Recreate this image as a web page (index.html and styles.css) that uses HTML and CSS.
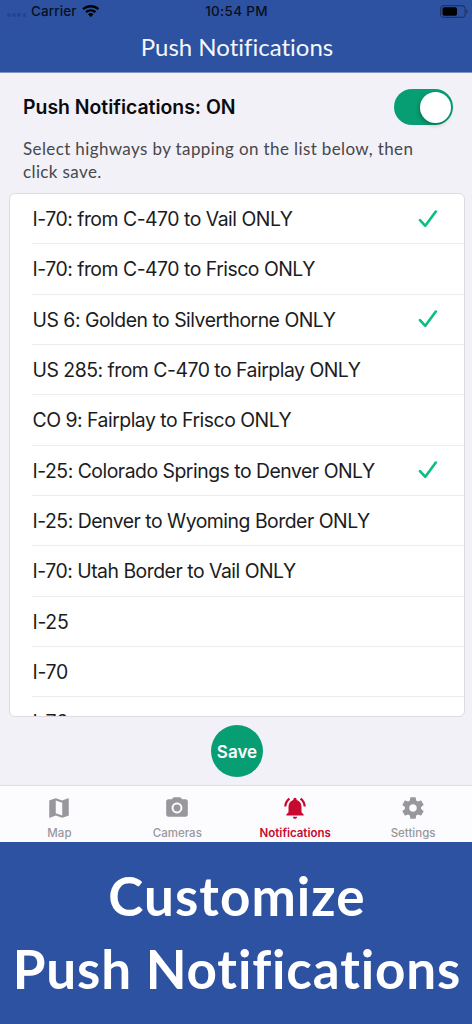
FILE: index.html
```html
<!DOCTYPE html>
<html lang="en">
<head>
<meta charset="utf-8">
<title>Push Notifications</title>
<link rel="stylesheet" href="styles.css">
</head>
<body>
<div class="screen">
  <header class="header">
    <div class="status">
      <div class="carrier">
        <span class="dots"><i></i><i></i><i></i><i></i></span>
        <span class="carrier-name">Carrier</span>
        <svg class="wifi" viewBox="0 0 18 13"><path d="M9 0C5.600 0 2.500 1.300.2 3.500l1.700 1.800C3.800 3.500 6.300 2.500 9 2.500s5.200 1 7.100 2.800l1.700-1.800C15.500 1.300 12.400 0 9 0zM9 4.300c-2.200 0-4.200.8-5.700 2.300l1.700 1.700C6.100 7.300 7.500 6.700 9 6.700s2.900.6 4 1.600l1.700-1.700C13.200 5.100 11.200 4.300 9 4.300zM9 8.400c-1.100 0-2.100.4-2.800 1.100L9 12.600l2.800-3.100C11.100 8.800 10.100 8.400 9 8.400z"/></svg>
      </div>
      <span class="time">10:54 PM</span>
      <svg class="battery" viewBox="0 0 28 13"><rect x=".6" y=".6" width="24.500" height="11.800" rx="3.500" fill="none" stroke="#1d3464" stroke-width="1.100"/><rect x="2.500" y="2.200" width="14.500" height="8.600" rx="1.800"/><path d="M26.200 4.500c2 .7 2 3.300 0 4z" fill="#1d3464"/></svg>
    </div>
    <h1 class="title">Push Notifications</h1>
  </header>
  <main class="main">
    <div class="toggle-row">
      <strong class="toggle-label">Push Notifications: ON</strong>
      <span class="switch"><span class="knob"></span></span>
    </div>
    <p class="hint">Select highways by tapping on the list below, then<br>click save.</p>
    <ul class="list">
      <li class="row"><span>I-70: from C-470 to Vail ONLY</span><svg class="check" viewBox="0 0 20 18"><path d="M2 10.200l5.300 5.600L17.800 1.600"/></svg></li>
      <li class="row"><span>I-70: from C-470 to Frisco ONLY</span></li>
      <li class="row"><span>US 6: Golden to Silverthorne ONLY</span><svg class="check" viewBox="0 0 20 18"><path d="M2 10.200l5.300 5.600L17.800 1.600"/></svg></li>
      <li class="row"><span>US 285: from C-470 to Fairplay ONLY</span></li>
      <li class="row"><span>CO 9: Fairplay to Frisco ONLY</span></li>
      <li class="row"><span>I-25: Colorado Springs to Denver ONLY</span><svg class="check" viewBox="0 0 20 18"><path d="M2 10.200l5.300 5.600L17.800 1.600"/></svg></li>
      <li class="row"><span>I-25: Denver to Wyoming Border ONLY</span></li>
      <li class="row"><span>I-70: Utah Border to Vail ONLY</span></li>
      <li class="row short"><span>I-25</span></li>
      <li class="row short"><span>I-70</span></li>
      <li class="row short"><span>I-76</span></li>
    </ul>
    <div class="save-wrap"><button class="save">Save</button></div>
  </main>
  <nav class="tabs">
    <div class="tab"><svg class="icon" viewBox="0 0 24 24"><path d="M20.500 3l-.16.03L15 5.100 9 3 3.360 4.900c-.21.070-.36.250-.36.480V20.500c0 .28.220.5.500.5l.16-.03L9 18.900l6 2.100 5.640-1.900c.21-.07.36-.25.36-.48V3.500c0-.28-.22-.5-.5-.5zM15 19l-6-2.110V5l6 2.110V19z"/></svg><span>Map</span></div>
    <div class="tab"><svg class="icon" viewBox="0 0 24 24"><circle cx="12" cy="12" r="3.200"/><path d="M9 2L7.170 4H4c-1.100 0-2 .9-2 2v12c0 1.100.9 2 2 2h16c1.100 0 2-.9 2-2V6c0-1.100-.9-2-2-2h-3.170L15 2H9zm3 15c-2.760 0-5-2.240-5-5s2.240-5 5-5 5 2.240 5 5-2.240 5-5 5z"/></svg><span>Cameras</span></div>
    <div class="tab active"><svg class="icon" viewBox="0 0 24 24"><path d="M7.580 4.080L6.150 2.650C3.750 4.480 2.170 7.300 2.030 10.500h2c.15-2.650 1.510-4.970 3.550-6.420zM19.970 10.500h2c-.15-3.200-1.730-6.020-4.120-7.850l-1.420 1.430c2.020 1.450 3.390 3.770 3.540 6.420zM18 11c0-3.070-1.640-5.640-4.500-6.320V4c0-.83-.67-1.500-1.500-1.500s-1.500.67-1.500 1.500v.68C7.630 5.360 6 7.920 6 11v5l-2 2v1h16v-1l-2-2v-5zM12 22c.14 0 .27-.01.4-.04.65-.14 1.180-.58 1.440-1.180.1-.24.150-.5.150-.78h-4c.01 1.100.9 2 2.010 2z"/></svg><span>Notifications</span></div>
    <div class="tab"><svg class="icon" viewBox="0 0 24 24"><path d="M19.430 12.980c.04-.32.070-.64.070-.98s-.03-.66-.07-.98l2.110-1.650c.19-.15.240-.42.120-.64l-2-3.460c-.12-.22-.39-.3-.61-.22l-2.490 1c-.52-.4-1.080-.73-1.690-.98l-.38-2.650C14.460 2.180 14.250 2 14 2h-4c-.25 0-.46.180-.49.420l-.38 2.650c-.61.250-1.170.59-1.690.98l-2.490-1c-.23-.09-.49 0-.61.220l-2 3.460c-.13.220-.07.490.12.640l2.110 1.650c-.04.320-.07.650-.07.980s.03.660.07.980l-2.110 1.650c-.19.150-.24.420-.12.640l2 3.460c.12.220.39.300.61.220l2.490-1c.52.400 1.080.730 1.690.980l.38 2.650c.03.240.24.420.49.420h4c.25 0 .46-.18.490-.42l.38-2.650c.61-.25 1.170-.59 1.690-.98l2.490 1c.23.090.49 0 .61-.22l2-3.460c.12-.22.070-.49-.12-.64l-2.110-1.650zM12 15.500c-1.930 0-3.500-1.570-3.500-3.500s1.570-3.500 3.500-3.500 3.500 1.570 3.500 3.500-1.570 3.500-3.500 3.500z"/></svg><span>Settings</span></div>
  </nav>
  <section class="banner">
    <div>Customize</div>
    <div class="wide">Push Notifications</div>
  </section>
</div>
</body>
</html>
```
FILE: styles.css
```css
* { box-sizing: border-box; }
body { margin: 0; font-family: Inter, "Liberation Sans", sans-serif; }
.screen { width: 472px; height: 1024px; overflow: hidden; display: flex; flex-direction: column; background: #f2f1f8; color: #1c1c1e; }
.header { height: 73px; background: #2d52a2; border-bottom: 1px solid #8094c3; flex: none; }
.status { height: 22px; display: grid; grid-template-columns: 1fr auto 1fr; align-items: center; padding: 0 4px 0 7px; color: #0a0f1c; font-size: 13.5px; font-weight: 500; }
.carrier { display: flex; align-items: center; }
.dots { display: flex; gap: 1.700px; padding-top: 8px; margin-right: 5px; }
.dots i { width: 3.500px; height: 3.500px; border-radius: 50%; background: #26468c; }
.carrier-name { letter-spacing: .1px; }
.wifi { width: 17.500px; height: 12.500px; margin-left: 5px; }
.time { letter-spacing: .3px; margin-right: 2px; }
.battery { width: 28px; height: 13px; justify-self: end; }
.title { margin: 0; text-align: center; font: 400 24px/49px Lato, sans-serif; letter-spacing: 0; color: #f4f6fb; font-variant-ligatures: none; padding-left: 2px; }
.main { flex: 1; display: flex; flex-direction: column; padding: 0 7px 0 9px; }
.toggle-row { display: flex; justify-content: space-between; align-items: center; height: 36px; margin-top: 16px; padding: 0 12px 0 14px; }
.toggle-label { font-size: 19.400px; font-weight: 600; color: #0b0b0d; }
.switch { width: 59px; height: 36px; border-radius: 18px; background: #089e73; padding: 2.500px; display: flex; justify-content: flex-end; }
.knob { width: 31px; height: 31px; border-radius: 50%; background: #fff; box-shadow: -1px 2px 4px #0004; }
.hint { margin: 12px 0 0 14px; font: 400 17px/23px Lato, sans-serif; letter-spacing: .38px; color: #47474c; height: 56px; }
.list { list-style: none; margin: 0; padding: 0; height: 524px; border: 1.500px solid #dcdce1; border-radius: 6px; background: #fff; overflow: hidden; }
.row { height: 50.350px; margin-left: 22px; padding: 0 26px 0 0; border-bottom: 1px solid #ececef; display: flex; align-items: center; justify-content: space-between; font-size: 19.400px; white-space: nowrap; letter-spacing: -.49px; }
.row span { padding: .6px 0 0 .5px; }
.short { letter-spacing: -.3px; }
.check { width: 20px; height: 18px; fill: none; stroke: #08be85; stroke-width: 2.600; stroke-linecap: round; stroke-linejoin: round; }
.save-wrap { display: flex; justify-content: center; padding-top: 8px; }
.save { width: 52px; height: 52px; border: 0; padding: 2px 0 0; border-radius: 50%; background: #089e73; color: #fff; font: 600 17px Inter, sans-serif; }
.tabs { height: 57px; flex: none; display: grid; grid-template-columns: repeat(4, 1fr); background: #fcfbfe; border-top: 1px solid #dfdee4; padding-left: .5px; }
.tab { display: flex; flex-direction: column; align-items: center; padding-top: 8.500px; color: #98979c; font-size: 11.500px; font-weight: 500; line-height: 14px; }
.tab span { margin-top: 5.500px; }
.icon { width: 26px; height: 26px; fill: currentColor; }
.active { color: #c7092f; font-weight: 600; }
.banner { height: 182px; flex: none; background: #2d52a2; color: #fff; text-align: center; font: 700 53px/73px Lato, sans-serif; letter-spacing: 1.050px; padding: 17px 0 0 2px; white-space: nowrap; font-variant-ligatures: none; }
.wide { letter-spacing: .85px; }
```
